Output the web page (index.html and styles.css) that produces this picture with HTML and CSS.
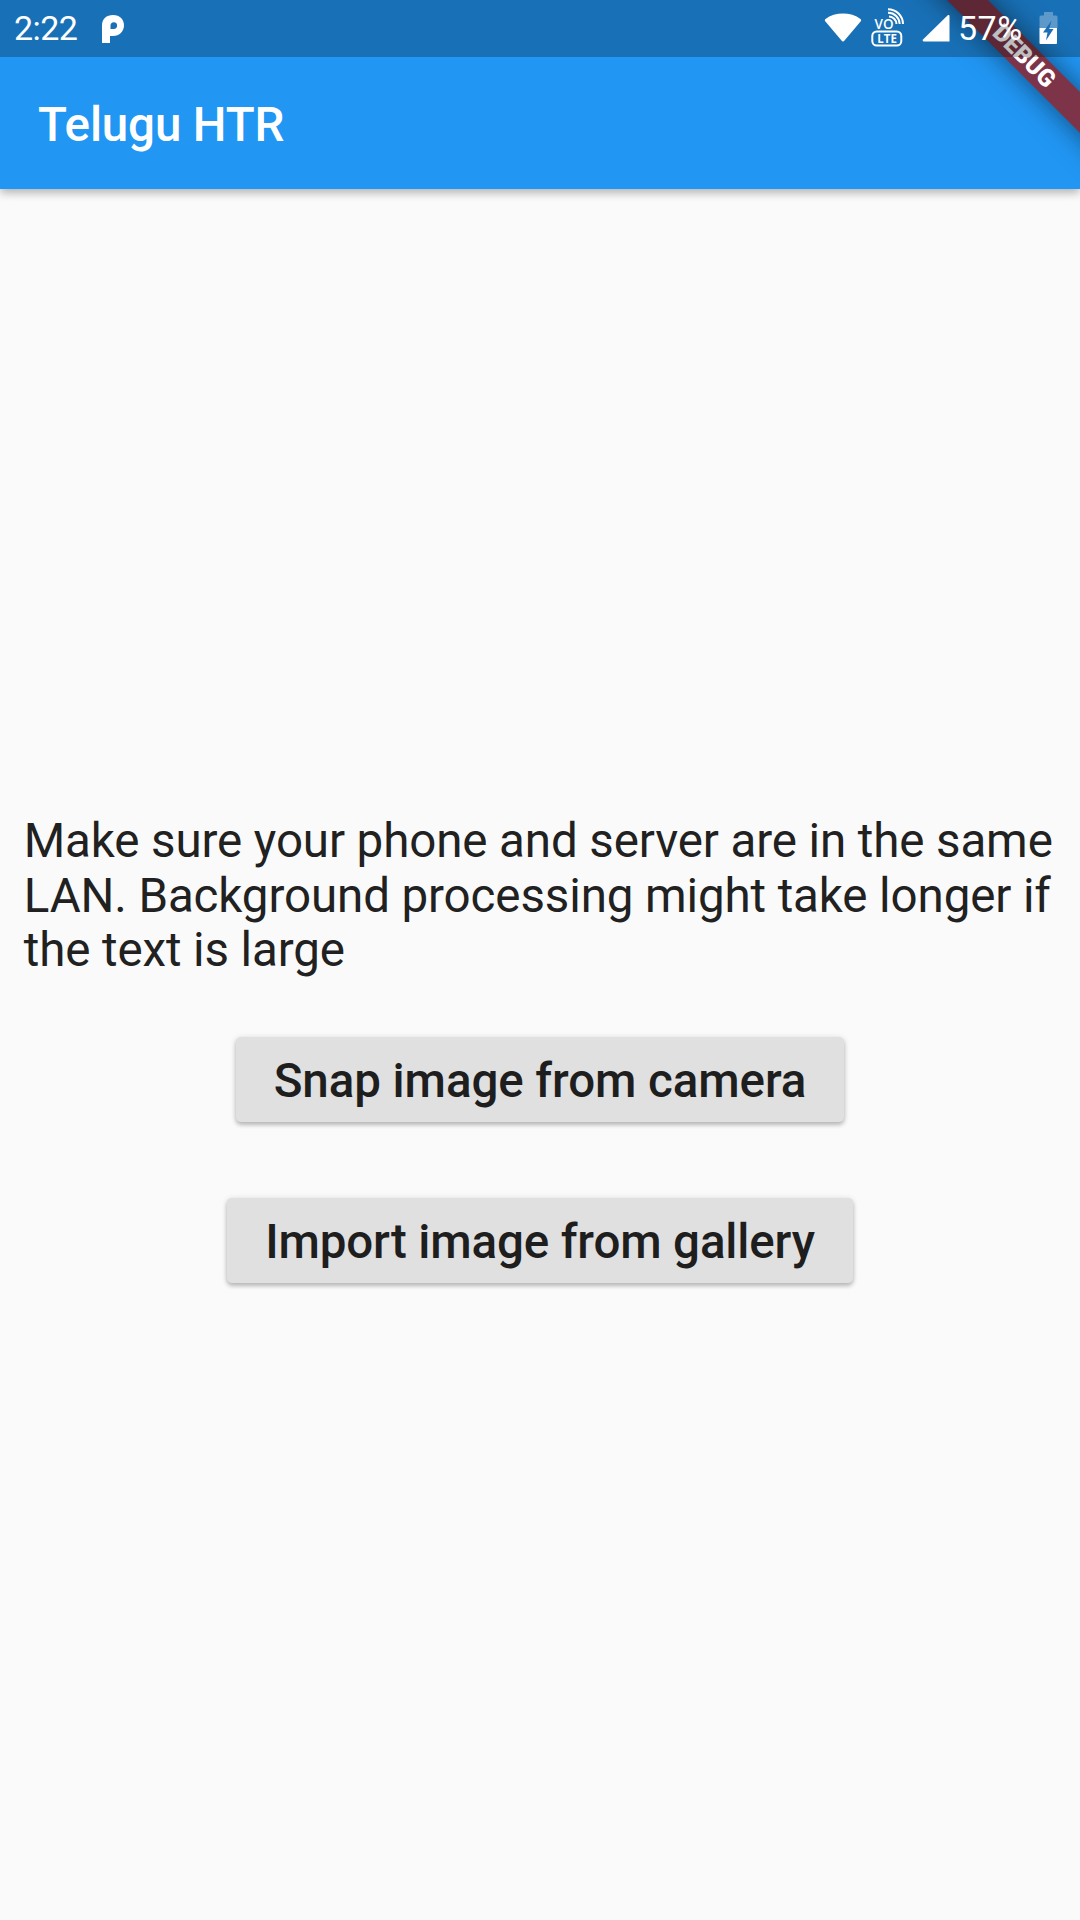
FILE: index.html
```html
<!DOCTYPE html>
<html lang="en">
<head>
<meta charset="utf-8">
<title>Telugu HTR</title>
<link rel="stylesheet" href="styles.css">
</head>
<body>
<div class="screen">
  <header class="app-bar"><h1 class="title">Telugu HTR</h1></header>
  <main class="content">
    <p class="message">Make sure your phone and server are in the same LAN. Background processing might take longer if the text is large</p>
    <button class="button" type="button">Snap image from camera</button>
    <button class="button button-import" type="button">Import image from gallery</button>
  </main>
  <div class="banner-clip"><div class="banner">DEBUG</div></div>
  <div class="status-bar">
    <div class="status-left">
      <span class="clock">2:22</span>
      <svg class="icon-p" width="24" height="30" viewBox="0 0 24 30"><path fill="#fff" fill-rule="evenodd" d="M1 29V11.500C1 5 5.500 1 12 1c7 0 11 4.500 11 10.300C23 17.500 18.500 22 12 22H9v7zM9.500 15h3.200a3.400 3.400 0 0 0 0-6.800c-2 0-3.200 1.400-3.200 3.200z"/></svg>
    </div>
    <div class="status-right">
      <svg class="icon-wifi" width="38" height="30" viewBox="0 0 38 30"><path fill="#fff" d="M19 28.500Q18 28.500 17.500 27.500L1 8Q0.500 6.800 1.500 6C11 -1.300 27 -1.300 36.500 6Q37.500 6.800 37 8L20.500 27.500Q20 28.500 19 28.500z"/></svg>
      <svg class="icon-volte" width="34" height="40" viewBox="0 0 34 40">
        <text class="vo" x="3.500" y="21.500" textLength="19" lengthAdjust="spacingAndGlyphs">VO</text>
        <g fill="none" stroke="#fff" stroke-width="2"><path d="M18 9.500a8 8 0 0 1 7.500 7.500M17 5.800a11.500 11.500 0 0 1 11.700 11.200M17 2.200a15 15 0 0 1 15 14.800"/><rect x="1.300" y="24.500" width="29" height="14" rx="4.500"/></g>
        <text class="lte" x="6.300" y="36" textLength="19.500" lengthAdjust="spacingAndGlyphs">LTE</text>
      </svg>
      <svg class="icon-signal" width="28" height="28" viewBox="0 0 28 28"><path fill="#fff" d="M26 1Q27.500 .5 27.500 2V27.500H1.500Q0 27 1 25.500z"/></svg>
      <span class="percent">57%</span>
      <svg class="icon-battery" width="19" height="33" viewBox="0 0 19 33"><path fill="#fff" fill-opacity=".3" d="M5 0h9v3.500h3q1.500 0 1.500 1.500V16H.5V5Q.5 3.500 2 3.500h3z"/><path fill="#fff" d="M.5 16h17.500v15q0 1-1 1H1.500q-1 0-1-1z"/><path fill="#1970b6" d="M12.500 8.500L4 20.500h4.500l-1.500 8L14.500 17H10.300z"/></svg>
    </div>
  </div>
</div>
</body>
</html>
```
FILE: styles.css
```css
* { box-sizing: border-box; }
body { margin: 0; font-family: Roboto, sans-serif; }
.screen {
  position: relative;
  display: flex;
  flex-direction: column;
  height: 1920px;
  overflow: hidden;
  background: #fafafa;
}
.app-bar {
  display: flex;
  align-items: center;
  height: 189px;
  padding: 60px 38px 0;
  background: #2196f3;
  box-shadow: 0 4px 8px rgba(0, 0, 0, .2), 0 2px 12px rgba(0, 0, 0, .12);
}
.title { margin: 0; color: #fff; font-size: 47.5px; font-weight: 500; line-height: 56px; letter-spacing: -.15px; }
.content {
  flex: 1;
  display: flex;
  flex-direction: column;
  align-items: center;
  padding: 625px 23.75px 0;
}
.message {
  width: 100%;
  margin: 0 0 59px;
  color: #212121;
  font-size: 47.5px;
  line-height: 54.5px;
  letter-spacing: -.11px;
}
.button {
  height: 85px;
  margin: 0 0 76px;
  padding: 3px 38px 0;
  border: 0;
  border-radius: 4.75px;
  background: #e0e0e0;
  color: #1e1e1e;
  font-family: inherit;
  font-size: 47.5px;
  font-weight: 500;
  line-height: 82px;
  letter-spacing: -.08px;
  box-shadow: 0 3px 4px rgba(0, 0, 0, .2), 0 1px 6px rgba(0, 0, 0, .14);
}
.button-import { letter-spacing: -.14px; }
.banner-clip { position: absolute; top: 0; right: 0; width: 200px; height: 189px; overflow: hidden; }
.banner {
  position: absolute;
  top: 42px;
  right: -144px;
  width: 400px;
  height: 28.5px;
  background: #7d3449;
  box-shadow: 0 0 28px rgba(0, 0, 0, .5);
  color: #fff;
  font-size: 24.2px;
  font-weight: 900;
  line-height: 28.5px;
  text-align: center;
  transform: rotate(45deg);
}
.status-bar {
  position: absolute;
  top: 0;
  left: 0;
  display: flex;
  justify-content: space-between;
  width: 100%;
  height: 57px;
  padding: 0 22px 0 14px;
  background: rgba(0, 0, 0, .25);
  color: #fff;
  font-size: 34px;
  line-height: 56px;
}
.status-left, .status-right { display: flex; align-items: flex-start; }
.clock { width: 87px; letter-spacing: -.6px; }
.icon-p { margin-top: 14px; }
.icon-wifi { margin: 13px 9px 0 0; }
.icon-volte { margin: 7px 17px 0 0; }
.icon-signal { margin: 14px 8px 0 0; }
.percent { width: 81px; letter-spacing: .5px; }
.icon-battery { margin-top: 12px; }
.vo, .lte { fill: #fff; font-family: "Open Sans", sans-serif; font-weight: 600; }
.vo { font-size: 15px; }
.lte { font-size: 12px; font-weight: 700; }
```
